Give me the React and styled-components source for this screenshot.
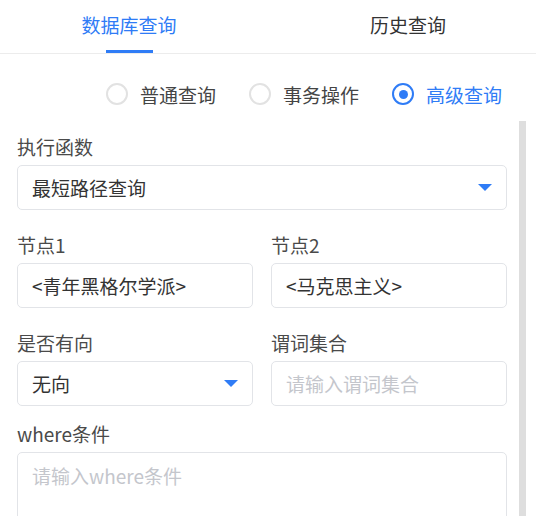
import React, { useState } from "react";
import styled, { createGlobalStyle } from "styled-components";

const GlobalStyle = createGlobalStyle`
    html, body {
        margin: 0;
        padding: 0;
        overflow: hidden;
        background: #fff;
    }
    body {
        font-family: "Noto Sans CJK SC", "Noto Sans", sans-serif;
        color: #333;
    }
    * {
        box-sizing: border-box;
    }
`;

const BLUE = "#2f7cf6";

const Panel = styled.div`
    width: 536px;
    height: 516px;
    overflow: hidden;
`;

const TabBar = styled.div`
    display: grid;
    grid-template-columns: 258px 1fr;
    border-bottom: 1px solid #ececec;
`;

const Tab = styled.div`
    display: flex;
    flex-direction: column;
    align-items: center;
    padding-left: ${p => p.$offset || 0}px;
    font-size: 19px;
    line-height: 50px;
    color: ${p => (p.$active ? BLUE : "#333")};
    cursor: pointer;
`;

const Indicator = styled.div`
    width: 47px;
    height: 3px;
    background: ${p => (p.$active ? BLUE : "transparent")};
`;

const RadioGroup = styled.div`
    display: flex;
    gap: 33px;
    padding: 20px 0 0 106px;
    height: 60px;
`;

const RadioItem = styled.label`
    display: flex;
    align-items: center;
    gap: 12px;
    height: 40px;
    font-size: 19px;
    color: ${p => (p.$checked ? BLUE : "#444")};
    cursor: pointer;
`;

const RadioDot = styled.span`
    width: 22px;
    height: 22px;
    border-radius: 50%;
    border: 2px solid ${p => (p.$checked ? BLUE : "#e2e2e2")};
    display: flex;
    align-items: center;
    justify-content: center;
    &::after {
        content: "";
        width: 9px;
        height: 9px;
        border-radius: 50%;
        background: ${p => (p.$checked ? BLUE : "transparent")};
    }
`;

const Body = styled.div`
    display: flex;
    margin-top: 7px;
    height: 460px;
`;

const Form = styled.div`
    flex: 1;
    padding: 14px 12px 28px 17px;
`;

// static look of the scroll bar thumb on the right side
const ScrollThumb = styled.div`
    width: 7px;
    margin-right: 10px;
    background: #dedede;
`;

const Row = styled.div`
    display: grid;
    grid-template-columns: 1fr 1fr;
    column-gap: 18px;
`;

const Field = styled.div`
    margin-bottom: ${p => (p.$gap !== undefined ? p.$gap : 23)}px;
`;

const Label = styled.div`
    font-size: 19px;
    line-height: 24px;
    margin-bottom: 6px;
    color: #4a4a4a;
`;

const SelectBox = styled.div`
    display: flex;
    align-items: center;
    justify-content: space-between;
    height: 45px;
    padding: 0 14px 0 14px;
    border: 1px solid #e2e4e8;
    border-radius: 5px;
    font-size: 19px;
    color: #333;
    background: #fff;
`;

const Caret = styled.span`
    width: 0;
    height: 0;
    border-left: 7.5px solid transparent;
    border-right: 7.5px solid transparent;
    border-top: 7px solid ${BLUE};
`;

const TextInput = styled.input`
    display: block;
    width: 100%;
    height: 45px;
    padding: 0 14px;
    border: 1px solid #e2e4e8;
    border-radius: 5px;
    font-family: inherit;
    font-size: 19px;
    color: #333;
    outline: none;
    &::placeholder {
        color: #c4c6cc;
    }
`;

const TextArea = styled.textarea`
    display: block;
    width: 100%;
    height: 100px;
    padding: 8px 14px;
    border: 1px solid #e2e4e8;
    border-radius: 5px;
    font-family: inherit;
    font-size: 19px;
    line-height: 30px;
    color: #333;
    resize: none;
    outline: none;
    &::placeholder {
        color: #c4c6cc;
    }
`;

const modes = ["普通查询", "事务操作", "高级查询"];

export default function App() {
    const [tab, setTab] = useState(0);
    const [mode, setMode] = useState(2);

    return <Panel>
        <GlobalStyle />
        <TabBar>
            <Tab $active={tab === 0} onClick={() => setTab(0)}>
                数据库查询
                <Indicator $active={tab === 0} />
            </Tab>
            <Tab $active={tab === 1} $offset={22} onClick={() => setTab(1)}>
                历史查询
                <Indicator $active={tab === 1} />
            </Tab>
        </TabBar>

        <RadioGroup>
            {modes.map((m, i) => (
                <RadioItem key={m} $checked={mode === i} onClick={() => setMode(i)}>
                    <RadioDot $checked={mode === i} />
                    {m}
                </RadioItem>
            ))}
        </RadioGroup>

        <Body>
            <Form>
                <Field>
                    <Label>执行函数</Label>
                    <SelectBox>
                        最短路径查询
                        <Caret />
                    </SelectBox>
                </Field>
                <Row>
                    <Field>
                        <Label>节点1</Label>
                        <TextInput readOnly value="<青年黑格尔学派>" />
                    </Field>
                    <Field>
                        <Label>节点2</Label>
                        <TextInput readOnly value="<马克思主义>" />
                    </Field>
                </Row>
                <Row>
                    <Field $gap={16}>
                        <Label>是否有向</Label>
                        <SelectBox>
                            无向
                            <Caret />
                        </SelectBox>
                    </Field>
                    <Field $gap={16}>
                        <Label>谓词集合</Label>
                        <TextInput placeholder="请输入谓词集合" />
                    </Field>
                </Row>
                <Field $gap={0}>
                    <Label>where条件</Label>
                    <TextArea placeholder="请输入where条件" />
                </Field>
            </Form>
            <ScrollThumb />
        </Body>
    </Panel>;
}
